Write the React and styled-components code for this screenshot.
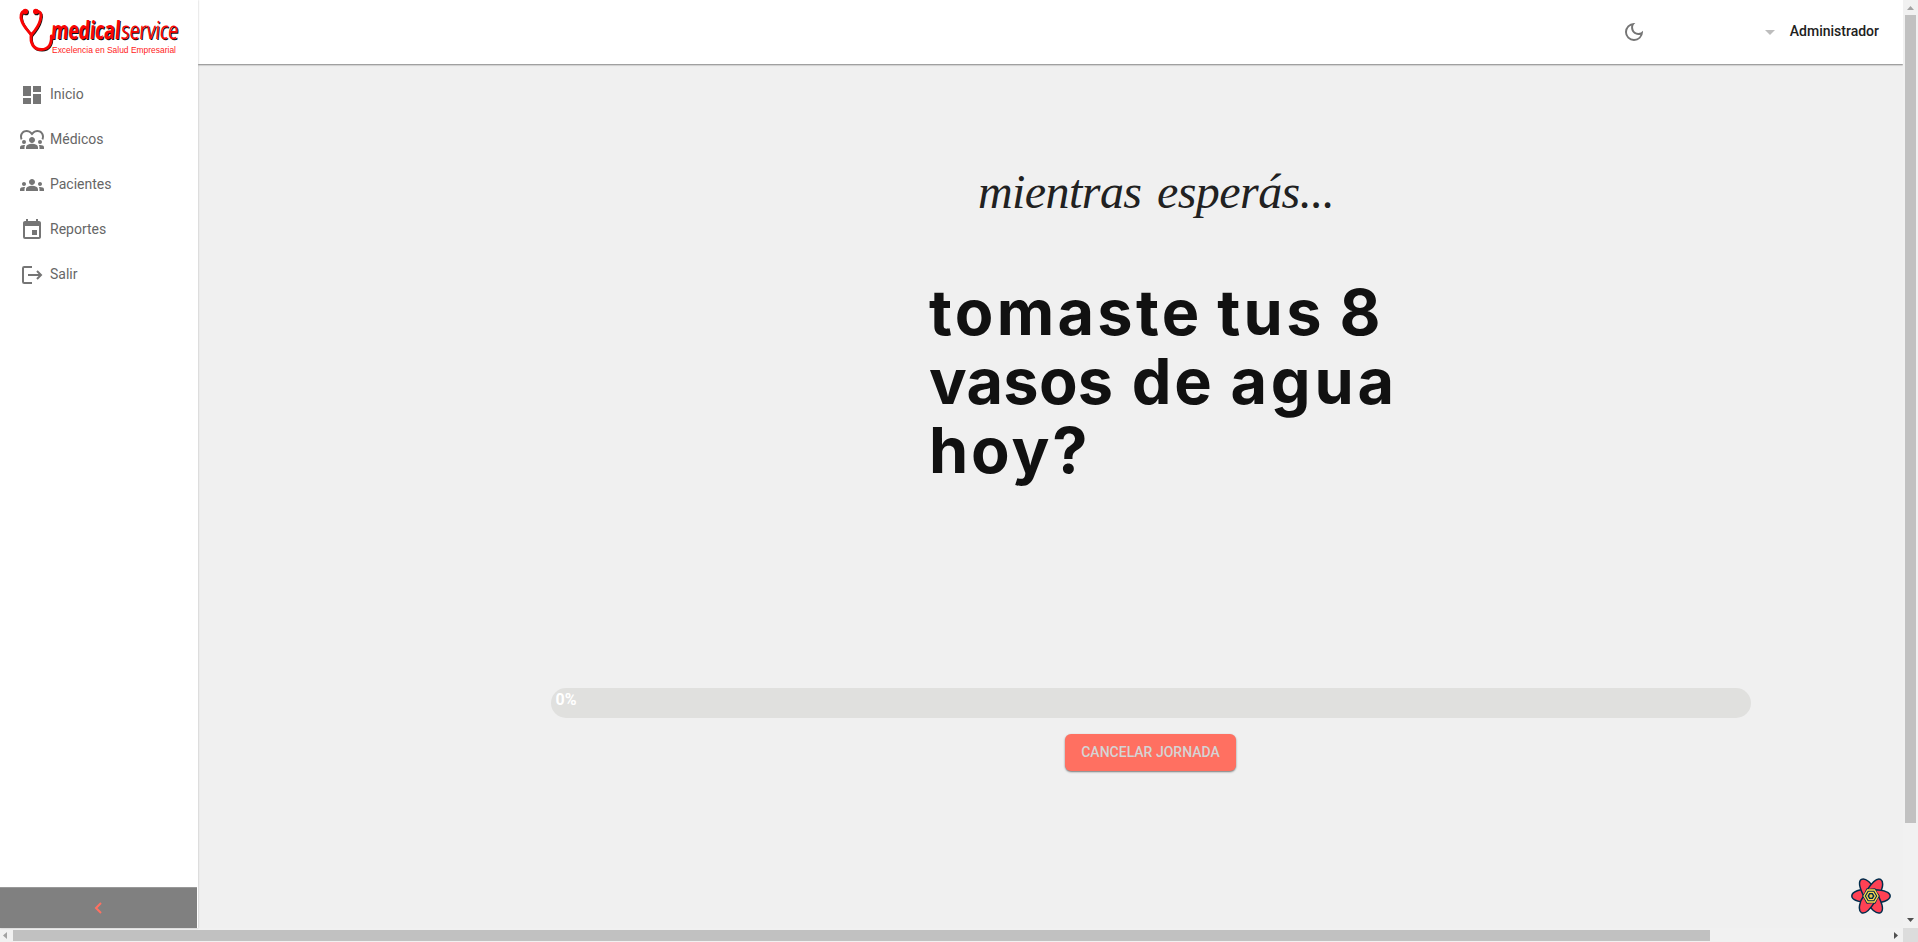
import React from "react";
import styled, { createGlobalStyle } from "styled-components";
import {
  MdDashboard,
  MdDiversity1,
  MdGroups,
  MdEvent,
  MdOutlineDarkMode,
  MdArrowDropDown,
} from "react-icons/md";

const GlobalStyle = createGlobalStyle`
  *, *::before, *::after { box-sizing: border-box; }
  body {
    margin: 0;
    background: #f0f0f0;
    font-family: Roboto, "Liberation Sans", sans-serif;
    overflow: hidden;
  }
`;

const Window = styled.div`
  width: 1918px;
  height: 942px;
  display: grid;
  grid-template-columns: 1903px 15px;
  grid-template-rows: 928px 14px;
`;

const Page = styled.div`
  display: flex;
  min-width: 0;
  background: #f0f0f0;
`;

const Sidebar = styled.aside`
  width: 198px;
  flex: none;
  display: flex;
  flex-direction: column;
  background: #fff;
  box-shadow: 0 0 2px rgba(0, 0, 0, 0.25);
  position: relative;
  z-index: 2;
`;

const Logo = styled.svg`
  display: block;
  width: 198px;
  height: 60px;
  flex: none;
  overflow: visible;
`;

const Menu = styled.nav`
  flex: 1;
  display: flex;
  flex-direction: column;
  padding: 11px 0 0 20px;
`;

const MenuItem = styled.a`
  height: 45px;
  display: flex;
  align-items: center;
  gap: 6px;
  color: #666;
  font-size: 14px;
  line-height: 20px;

  svg {
    width: 24px;
    height: 24px;
    color: #757575;
    position: relative;
    top: 1px;
  }
`;

const CollapseButton = styled.button`
  width: 197px;
  height: 41px;
  border: 0;
  border-top: 1px solid #999;
  padding: 0 2px 0 0;
  background: #808080;
  display: flex;
  align-items: center;
  justify-content: center;
`;

const Main = styled.div`
  flex: 1;
  min-width: 0;
  display: flex;
  flex-direction: column;
`;

const Header = styled.header`
  height: 64px;
  flex: none;
  display: flex;
  align-items: center;
  justify-content: flex-end;
  padding-right: 24px;
  background: #fff;
  box-shadow: 0 1px 1.5px rgba(0, 0, 0, 0.45);
`;

const ThemeToggle = styled(MdOutlineDarkMode)`
  width: 24px;
  height: 24px;
  color: #757575;
  margin-right: 112px;
`;

const UserMenu = styled.div`
  display: flex;
  align-items: center;
  gap: 8px;
  color: #212121;
  font-size: 14px;
  font-weight: 500;
  line-height: 20px;

  svg {
    width: 24px;
    height: 24px;
    color: #bdbdbd;
  }
  span {
    padding-bottom: 2px;
  }
`;

const Content = styled.main`
  width: 1200px;
  margin-left: 353px;
  flex: 1;
  display: flex;
  flex-direction: column;
  align-items: center;
`;

const Waiting = styled.h2`
  margin: 98px 0 0 10px;
  height: 59px;
  color: #212121;
  font: italic 400 48px/60px "Liberation Serif", serif;
  letter-spacing: -0.55px;
  word-spacing: 4px;
  white-space: nowrap;
`;

const Tip = styled.h1`
  margin: 57px 0 0 378px;
  align-self: flex-start;
  height: 410px;
  color: #111;
  font: 700 63px/69px Inter, sans-serif;
  white-space: nowrap;
`;

const TipLine = styled.span`
  display: flex;
  gap: ${({ $gap }) => $gap || 0}px;
`;

const Word = styled.span`
  letter-spacing: ${({ $spacing }) => $spacing}px;
  margin-right: ${({ $spacing }) => -$spacing}px;
`;

const Progress = styled.div`
  width: 1200px;
  height: 30px;
  flex: none;
  border-radius: 15px;
  background: #e0e0de;
  padding: 2px 4.5px;
  color: #fff;
  font-size: 16px;
  font-weight: 700;
  line-height: 20px;
`;

const CancelButton = styled.button`
  margin: 16px 1px 0 0;
  width: 171px;
  height: 37px;
  border: 0;
  border-radius: 6px;
  padding: 0 0 1px;
  background: #ff7061;
  color: #d4d4d4;
  font: 500 14px/24px Roboto, sans-serif;
  white-space: nowrap;
  box-shadow: 0 1px 2px rgba(0, 0, 0, 0.5);
`;

const QueryBadge = styled.svg`
  position: absolute;
  left: 1851px;
  top: 876px;
  width: 40px;
  height: 40px;
`;

const VerticalBar = styled.div`
  display: flex;
  flex-direction: column;
  align-items: center;
  justify-content: space-between;
  background: #f1f1f1;
`;

const HorizontalBar = styled.div`
  display: flex;
  align-items: center;
  background: #f1f1f1;
`;

const ScrollArrow = styled.svg`
  display: block;
  flex: none;
  width: ${({ $w }) => $w}px;
  height: ${({ $h }) => $h}px;
  fill: ${({ $fill }) => $fill};
`;

const VerticalThumb = styled.div`
  width: 11px;
  height: 808px;
  margin-bottom: auto;
  background: #c1c1c1;
`;

const HorizontalThumb = styled.div`
  width: 1697px;
  height: 11px;
  margin-right: auto;
  background: #c1c1c1;
`;

const Corner = styled.div`
  background: #dcdcdc;
`;

const ExitIcon = () => (
  <svg viewBox="0 0 24 24" fill="none" stroke="currentColor" strokeWidth="2">
    <path d="M12 4H4.2Q3 4 3 5.2V18.8Q3 20 4.2 20H12M8 12H21M17 8l4 4-4 4" />
  </svg>
);

const items = [
  ["Inicio", MdDashboard],
  ["Médicos", MdDiversity1],
  ["Pacientes", MdGroups],
  ["Reportes", MdEvent],
  ["Salir", ExitIcon],
];

const BrandLogo = () => (
  <Logo viewBox="0 0 198 60">
    {["#111", "#fa0505"].map((color, i) => (
      <g key={color} transform={i ? "translate(.3 0)" : "translate(1.1 .9)"} fill={color}>
        <g fill="none" stroke={color} strokeWidth={i ? 2.9 : 2.3} strokeLinecap="round">
          <path d="M24.500 11C20.500 12 19.800 16 21.500 21C23.500 27 27.500 30 31 35C34.500 31 38.500 26 40 20C41.500 15 41 11.500 36 11" />
          <path d="M31 34C29.500 43 33 49.500 41 49.500C48.500 49.500 51.500 44 51 36" />
        </g>
        <circle cx="25" cy="11.500" r="2.800" />
        <circle cx="35.500" cy="11.500" r="2.800" />
      </g>
    ))}
    {["#111", "#fa0505"].map((color, i) => (
      <g
        key={color}
        transform={i ? "translate(50.500 39) skewX(-5)" : "translate(51.600 39.900) skewX(-5)"}
        fill={color}
        fontFamily="Open Sans, sans-serif"
        fontSize="25"
      >
        <text fontWeight="700" textLength="69" lengthAdjust="spacingAndGlyphs">medical</text>
        <text x="70" fontWeight="500" textLength="57" lengthAdjust="spacingAndGlyphs">service</text>
      </g>
    ))}
    <text
      x="52"
      y="53.300"
      fill="#f22"
      fontFamily="Liberation Sans, sans-serif"
      fontSize="8.800"
      textLength="124"
      lengthAdjust="spacingAndGlyphs"
    >
      Excelencia en Salud Empresarial
    </text>
  </Logo>
);

const petal = "M-4 -6.300C-10 -7.300 -19 -4.500 -19.200 0C-19 4.500 -10 6 -3.500 6.300L-8 0Z";

export default function App() {
  return (
    <>
      <GlobalStyle />
      <Window>
        <Page>
          <Sidebar>
            <BrandLogo />
            <Menu>
              {items.map(([label, Icon]) => (
                <MenuItem key={label}>
                  <Icon />
                  {label}
                </MenuItem>
              ))}
            </Menu>
            <CollapseButton>
              <svg width="8" height="12" viewBox="0 0 8 12" fill="none" stroke="#ff7061" strokeWidth="2">
                <path d="M7 1L2 6l5 5" />
              </svg>
            </CollapseButton>
          </Sidebar>
          <Main>
            <Header>
              <ThemeToggle />
              <UserMenu>
                <MdArrowDropDown />
                <span>Administrador</span>
              </UserMenu>
            </Header>
            <Content>
              <Waiting>mientras esperás...</Waiting>
              <Tip>
                <TipLine $gap={18}>
                  <Word $spacing={3.3}>tomaste</Word>
                  <Word $spacing={3.3}>tus</Word>
                  <Word $spacing={0}>8</Word>
                </TipLine>
                <TipLine $gap={18.5}>
                  <Word $spacing={0.3}>vasos</Word>
                  <Word $spacing={3}>de</Word>
                  <Word $spacing={3.8}>agua</Word>
                </TipLine>
                <TipLine>
                  <Word $spacing={2.9}>hoy?</Word>
                </TipLine>
              </Tip>
              <Progress>0%</Progress>
              <CancelButton>CANCELAR JORNADA</CancelButton>
            </Content>
          </Main>
        </Page>
        <VerticalBar>
          <ScrollArrow $w={15} $h={15} $fill="#a3a3a3" viewBox="0 0 15 15">
            <path d="M4 10L7.500 6L11 10Z" />
          </ScrollArrow>
          <VerticalThumb />
          <ScrollArrow $w={15} $h={15} $fill="#505050" viewBox="0 0 15 15">
            <path d="M4 5L7.500 9L11 5Z" />
          </ScrollArrow>
        </VerticalBar>
        <HorizontalBar>
          <ScrollArrow $w={13} $h={14} $fill="#a3a3a3" viewBox="0 0 13 14">
            <path d="M7 4L3 7.500L7 11Z" />
          </ScrollArrow>
          <HorizontalThumb />
          <ScrollArrow $w={13} $h={14} $fill="#505050" viewBox="0 0 13 14">
            <path d="M4 4L8 7.500L4 11Z" />
          </ScrollArrow>
        </HorizontalBar>
        <Corner />
      </Window>
      <QueryBadge viewBox="-20 -20 40 40">
        <g fill="#ff4154" stroke="#002c4b" strokeWidth="1.500" strokeLinejoin="round">
          {[0, 60, 120, 180, 240, 300].map((angle) => (
            <path key={angle} d={petal} transform={`rotate(${angle})`} />
          ))}
        </g>
        <g fill="#002c4b" stroke="#ffd94c" strokeWidth="1.300">
          <path d="M-7 0L-3.500 -6H3.500L7 0L3.500 6H-3.500Z" />
          <path d="M-4.300 0L-2.150 -3.700H2.150L4.300 0L2.150 3.700H-2.150Z" />
          <circle r="1" />
        </g>
      </QueryBadge>
    </>
  );
}
